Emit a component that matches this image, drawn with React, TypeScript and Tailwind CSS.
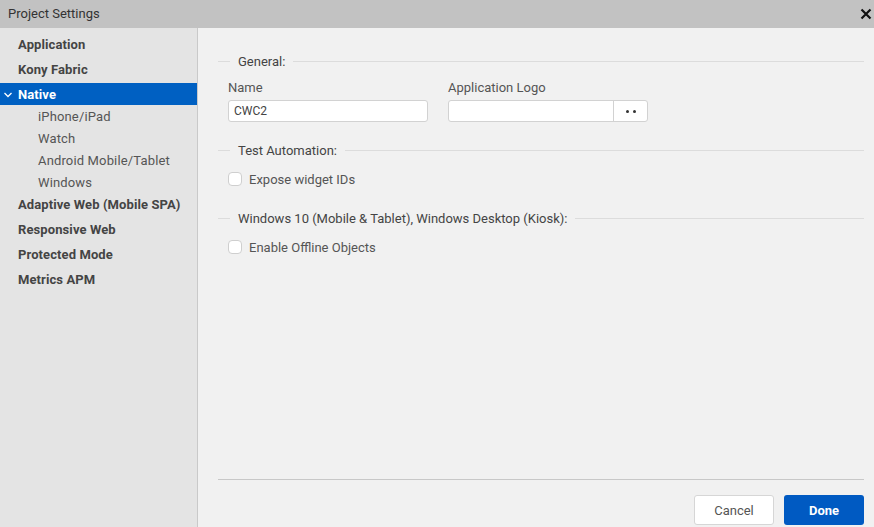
import { ReactNode } from 'react';

const font = { fontFamily: 'Roboto, "Noto Sans", sans-serif' };

function Legend({ children }: { children: ReactNode }) {
  return (
    <div className="flex h-4 items-center">
      <div className="h-px w-3 bg-[#dcdcdc]" />
      <span className="px-2 pt-px text-[13px] text-[#444]">{children}</span>
      <div className="h-px flex-1 bg-[#dcdcdc]" />
    </div>
  );
}

function Check({ label }: { label: string }) {
  return (
    <div className="ml-[10px] flex h-4 items-center">
      <div className="h-[14px] w-[14px] rounded-[4px] border border-[#cfcfcf] bg-white" />
      <span className="ml-[7px] pt-[2px] text-[13px] text-[#555]">{label}</span>
    </div>
  );
}

const topItems = ['Application', 'Kony Fabric'];
const subItems = ['iPhone/iPad', 'Watch', 'Android Mobile/Tablet', 'Windows'];
const bottomItems = ['Responsive Web', 'Protected Mode', 'Metrics APM'];

export default function App() {
  return (
    <div className="flex h-[527px] w-[874px] flex-col overflow-hidden bg-[#f1f1f1]" style={font}>
      {/* Title bar */}
      <div className="flex h-[28px] shrink-0 items-center justify-between bg-[#c2c2c2] pl-2 pr-[2px]">
        <span className="text-[13px] text-[#333]">Project Settings</span>
        <svg width="12" height="12" viewBox="0 0 12 12">
          <path d="M1.5 1.5 L10.5 10.5 M10.5 1.5 L1.5 10.5" stroke="#111" strokeWidth="2.2" />
        </svg>
      </div>

      <div className="flex flex-1">
        {/* Sidebar */}
        <div className="w-[198px] shrink-0 border-r border-[#c9c9c9] bg-[#e4e4e4] pt-1 text-[13px] font-bold tracking-[0.1px] text-[#444]">
          {topItems.map((t) => (
            <div key={t} className="flex h-[25px] items-center pl-[18px]">{t}</div>
          ))}
          <div className="mt-px flex h-[22px] items-center bg-[#0060c2] pt-px text-white">
            <svg width="18" height="10" viewBox="0 0 18 10" className="shrink-0">
              <path d="M4.5 3 L8 6.5 L11.5 3" stroke="#fff" strokeWidth="1.3" fill="none" />
            </svg>
            <span>Native</span>
          </div>
          {subItems.map((t) => (
            <div key={t} className="flex h-[22px] items-center pl-[38px] pt-px font-normal tracking-[0.15px] text-[#555]">{t}</div>
          ))}
          <div className="flex h-[24px] items-center pl-[18px]">Adaptive Web (Mobile SPA)</div>
          {bottomItems.map((t) => (
            <div key={t} className="flex h-[25px] items-center pl-[18px]">{t}</div>
          ))}
        </div>

        {/* Content */}
        <div className="flex flex-1 flex-col pl-5 pr-[10px] pt-[25px]">
          <Legend>General:</Legend>
          <div className="ml-[10px] mt-[11px] flex gap-5">
            <div className="flex w-[200px] flex-col">
              <span className="h-[14px] pt-px text-[13px] leading-[14px] text-[#555]">Name</span>
              <div className="mt-[6px] flex h-[22px] items-center rounded-[3px] border border-[#d2d2d2] bg-white px-[5px] text-[12px] text-[#444]">
                CWC2
              </div>
            </div>
            <div className="flex w-[200px] flex-col">
              <span className="h-[14px] pt-px text-[13px] leading-[14px] text-[#555]">Application Logo</span>
              <div className="mt-[6px] flex h-[22px] rounded-[3px] border border-[#d2d2d2] bg-white">
                <div className="flex-1" />
                <div className="flex w-[34px] items-center justify-center gap-[4px] border-l border-[#d2d2d2]">
                  <span className="h-[3px] w-[3px] rounded-full bg-[#333]" />
                  <span className="h-[3px] w-[3px] rounded-full bg-[#333]" />
                </div>
              </div>
            </div>
          </div>

          <div className="mt-5">
            <Legend>Test Automation:</Legend>
          </div>
          <div className="mt-[13px]">
            <Check label="Expose widget IDs" />
          </div>

          <div className="mt-[23px]">
            <Legend>Windows 10 (Mobile &amp; Tablet), Windows Desktop (Kiosk):</Legend>
          </div>
          <div className="mt-[13px]">
            <Check label="Enable Offline Objects" />
          </div>

          <div className="flex-1" />
          <div className="h-px bg-[#c8c8c8]" />
          <div className="flex justify-end gap-[10px] pb-[2px] pt-[15px]">
            <button className="h-[30px] w-[80px] rounded-[3px] border border-[#d6d6d6] bg-white pt-px text-[13px] text-[#555]">
              Cancel
            </button>
            <button className="h-[30px] w-[80px] rounded-[3px] bg-[#005ac2] pt-px text-[13px] font-bold text-white">
              Done
            </button>
          </div>
        </div>
      </div>
    </div>
  );
}
